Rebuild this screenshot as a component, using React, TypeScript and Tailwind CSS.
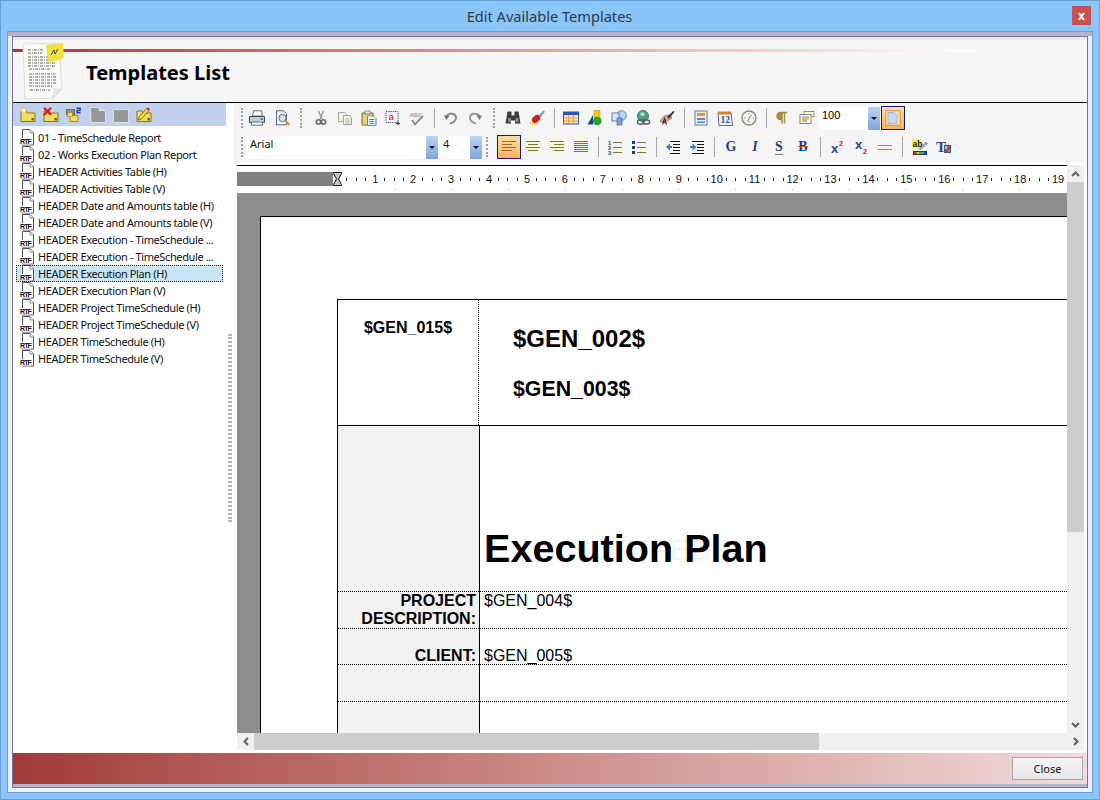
import React from "react";

const UI = "font-['Noto_Sans','DejaVu_Sans',sans-serif]";
const DOC = "font-['Liberation_Sans',Arial,sans-serif]";

function Svg({ children, s = 16 }: { children: React.ReactNode; s?: number }) {
  return (
    <svg width={s} height={s} viewBox="0 0 16 16" className="block shrink-0 overflow-visible">
      {children}
    </svg>
  );
}

const Folder = ({ fill = "#f3df5e", edge = "#7a6618" }: { fill?: string; edge?: string }) => (
  <>
    <path d="M1 6 V4 h5 l1 2 h8 v8.5 H1z" fill={fill} stroke={edge} strokeWidth="0.9" />
    <rect x="11.5" y="11" width="2.4" height="2.4" fill="#6b5a18" />
  </>
);

const icons: Record<string, React.ReactNode> = {
  newf: (
    <Svg>
      <Folder />
      <circle cx="3.5" cy="3.5" r="2.6" fill="#fff2a0" stroke="#e8b030" strokeWidth="1" strokeDasharray="1 .6" />
    </Svg>
  ),
  delf: (
    <Svg>
      <Folder />
      <path d="M1 .8 8 8M8 .8 1 8" stroke="#d81e10" strokeWidth="2.2" />
    </Svg>
  ),
  swapf: (
    <Svg>
      <rect x="0.5" y="2.5" width="8" height="5.5" fill="#8d8d8d" stroke="#555" strokeWidth=".7" />
      <path d="M4 8.5 h8 v6 H4z" fill="#f3df5e" stroke="#8a7420" strokeWidth=".8" />
      <rect x="1.5" y="5.5" width="5" height="4" fill="#f3df5e" stroke="#8a7420" strokeWidth=".6" />
      <path d="M10.5 1.2 h3.6 v2.4 h-3 v2.2 h3.4" fill="none" stroke="#1a46a8" strokeWidth="1.5" />
    </Svg>
  ),
  gray1: (
    <Svg>
      <path d="M0.5 .5 h8 l1 3 h6 v12 H1 z" fill="#989898" stroke="#fff" strokeWidth=".6" />
    </Svg>
  ),
  gray2: (
    <Svg>
      <path d="M.5 2.500 h15 v13 H.5z" fill="#989898" stroke="#fff" strokeWidth=".6" />
    </Svg>
  ),
  editf: (
    <Svg>
      <Folder />
      <path d="M3 10 10.5 1.5 13 3.5 5.5 12 2.5 13z" fill="#f8d848" stroke="#6b5a18" strokeWidth=".8" />
      <path d="M10.5 1.5 13 3.5 14 2 12 .4z" fill="#d81e10" />
    </Svg>
  ),
  print: (
    <Svg>
      <path d="M4.500 .8 h8 l1 5.200 H3.500z" fill="#fff" stroke="#4c5a72" strokeWidth=".9" />
      <path d="M.5 6.500 h15 v6 H.5z" fill="#c4ced9" stroke="#3c4c62" />
      <path d="M2.500 12 h11 v3.200 H2.500z" fill="#fff" stroke="#4c5a72" strokeWidth=".9" />
      <rect x="11.5" y="8" width="2.500" height="1.800" fill="#3f78c0" />
    </Svg>
  ),
  preview: (
    <Svg>
      <path d="M1.500 .8 h7 l3 3 v11 h-10z" fill="#fff" stroke="#3f4c7c" strokeWidth=".9" />
      <circle cx="7.5" cy="8" r="3.700" fill="#d6e6f5" stroke="#5a6a80" />
      <path d="M10 10.5 14.5 15" stroke="#c89a30" strokeWidth="2.200" />
    </Svg>
  ),
  cut: (
    <Svg>
      <path d="M5.5 1 9 9M10.5 1 7 9" stroke="#9a9a9a" strokeWidth="1.4" />
      <circle cx="5.5" cy="12" r="2.2" fill="none" stroke="#6a6a6a" strokeWidth="1.6" />
      <circle cx="10.5" cy="12" r="2.2" fill="none" stroke="#6a6a6a" strokeWidth="1.6" />
    </Svg>
  ),
  copy: (
    <Svg>
      <path d="M1.5 2.5 h6 l2 2 v7 h-8z" fill="#f2f2e8" stroke="#a6a698" />
      <path d="M6.5 5.5 h6 l2 2 v7 h-8z" fill="#f6f6ee" stroke="#a6a698" />
      <path d="M8 9h5M8 11h5M8 13h5" stroke="#b5b5a8" />
    </Svg>
  ),
  paste: (
    <Svg>
      <path d="M1 3 h11 v12 H1z" fill="#e4cf80" stroke="#7d6a30" />
      <rect x="4" y="1" width="5" height="3" fill="#eee" stroke="#666" strokeWidth=".7" />
      <path d="M6.5 6 h6 l2.5 2.5 V15.5 H6.5z" fill="#fff" stroke="#5a6a80" strokeWidth=".8" />
      <path d="M8 9.5h5.5M8 11.5h5.5M8 13.5h5.5" stroke="#2f8fb0" />
    </Svg>
  ),
  selall: (
    <Svg>
      <rect x="1" y="1.5" width="12" height="11" fill="none" stroke="#2050c0" strokeDasharray="1.3 1" />
      <text x="3.5" y="10" fontSize="9.5" fontFamily="Liberation Sans" fill="#b01818">a</text>
      <path d="M13 11.5v4M11 13.5h4" stroke="#333" />
    </Svg>
  ),
  spell: (
    <Svg>
      <text x="0.5" y="6.5" fontSize="6" fontWeight="700" fontFamily="Liberation Sans" fill="#9a9a9a">ABC</text>
      <path d="M3 10 6 14.5 14 6" fill="none" stroke="#8e8e8e" strokeWidth="2" />
    </Svg>
  ),
  undo: (
    <Svg>
      <path d="M3.500 8 C3 3 12 2 13 7 C13.500 10 11 13 7 13.500" fill="none" stroke="#8d8d8d" strokeWidth="2" />
      <path d="M1 5.500 L6.500 5.500 L3.500 10z" fill="#6f6f6f" />
    </Svg>
  ),
  redo: (
    <Svg>
      <path d="M12.500 8 C13 3 4 2 3 7 C2.500 10 5 13 9 13.500" fill="none" stroke="#9a9a9a" strokeWidth="2" />
      <path d="M15 5.500 L9.500 5.500 L12.500 10z" fill="#7a7a7a" />
    </Svg>
  ),
  binoc: (
    <Svg>
      <path d="M2.500 1.500 h4 v4 h3 v-4 h4 l2 12 h-5.500 v-3 h-4 v3 H.5z" fill="#3c3c3c" />
      <rect x="3" y="8" width="3" height="4" fill="#8a8a8a" />
      <rect x="10.500" y="8" width="3" height="4" fill="#8a8a8a" />
    </Svg>
  ),
  brush: (
    <Svg>
      <path d="M9 6.500 14.500 .8 15.500 1.800 10.500 8z" fill="#8aa8cc" stroke="#4a6a90" strokeWidth=".5" />
      <ellipse cx="7" cy="9" rx="4.500" ry="3.400" transform="rotate(-40 7 9)" fill="#c42818" />
      <path d="M1 13c2 1 5 2 7 .5" stroke="#f0b020" strokeWidth="2" fill="none" strokeDasharray="1 1" />
    </Svg>
  ),
  table: (
    <Svg>
      <rect x=".5" y="2" width="15" height="12" fill="#fbe3a8" stroke="#1c5cc0" />
      <rect x=".5" y="2" width="15" height="3" fill="#1c5cc0" />
      <path d="M.5 8h15M.5 11h15M5.500 5v9M10.500 5v9" stroke="#e89020" strokeWidth=".8" />
    </Svg>
  ),
  shapes: (
    <Svg>
      <path d="M7 .5 h6 v8 H7z" fill="#f4c820" stroke="#a08010" strokeWidth=".5" />
      <path d="M.5 14.500 6 5 v9.500z" fill="#1f3f86" />
      <path d="M6 11 a4 4 0 1 1 8.500 0 a4 4 0 1 1 -8.500 0" fill="#2aa02a" />
    </Svg>
  ),
  shapes2: (
    <Svg>
      <circle cx="10.500" cy="5.500" r="4.800" fill="#b8d4f0" stroke="#5a84b0" />
      <rect x="1" y="3" width="7" height="8" fill="#d8e8f8" stroke="#5a84b0" />
      <path d="M6 8 h5 v7 H6z" fill="#7aa6d8" stroke="#40689a" strokeWidth=".7" />
    </Svg>
  ),
  globe: (
    <Svg>
      <circle cx="8" cy="6" r="5.500" fill="#4aa868" stroke="#506a80" />
      <path d="M5 3 q4-2 5 1 q-1 3-4 2z" fill="#a8d8f0" />
      <rect x="2.500" y="10" width="6.500" height="4" rx="2" fill="none" stroke="#4a5c78" strokeWidth="1.400" />
      <rect x="8" y="10" width="6.500" height="4" rx="2" fill="none" stroke="#4a5c78" strokeWidth="1.400" />
    </Svg>
  ),
  pen: (
    <Svg>
      <path d="M1 12 Q4 4 11 5 L13 8 Q8 13 1 12z" fill="#f0a070" stroke="#a05020" strokeWidth=".6" />
      <path d="M8 7 14.500 .8 15.500 2 10 8.500z" fill="#333" />
      <path d="M3.500 14.500 l2 -6 2 6M4.300 12.500h2.600" stroke="#202080" strokeWidth="1.100" fill="none" />
    </Svg>
  ),
  form: (
    <Svg>
      <rect x="2" y="1" width="12" height="14" fill="#e8eef8" stroke="#6a7a98" />
      <rect x="4" y="3" width="8" height="3" fill="#e89830" />
      <rect x="4" y="8" width="8" height="2" fill="#5a8ad0" />
      <rect x="4" y="11.500" width="8" height="1.500" fill="#5a8ad0" />
    </Svg>
  ),
  cal: (
    <Svg>
      <path d="M1 3 h13 l1.500 12.500 H2z" fill="#f4f6fa" stroke="#5a6a8a" />
      <path d="M1 1.500 h13 v3 H1z" fill="#d88030" />
      <text x="3.500" y="13" fontSize="9.500" fontWeight="700" fontFamily="Liberation Serif" fill="#1e4c9c">12</text>
    </Svg>
  ),
  clock: (
    <Svg>
      <circle cx="8" cy="8" r="7" fill="#f4f4ee" stroke="#8c8c84" strokeWidth="1.400" />
      <path d="M8 3v1.500M8 11.500V13M3 8h1.500M11.500 8H13" stroke="#a0a090" />
      <path d="M8 8l2.500-3M8 8l-1 3" stroke="#8a7a50" fill="none" />
    </Svg>
  ),
  para: (
    <Svg>
      <path d="M7 13.500V2.500h-1.500a3.400 3.400 0 0 0 0 7H7M7 2.500h5M9.500 2.500v11" fill="#a88a40" stroke="#a88a40" strokeWidth="1.500" />
    </Svg>
  ),
  field: (
    <Svg>
      <rect x="5" y="1.500" width="10" height="5" fill="#fff" stroke="#a89040" />
      <rect x="1" y="4.500" width="11" height="9" fill="#f8f8f0" stroke="#7a8898" />
      <path d="M3 7h7M3 9h7M3 11h5" stroke="#a08830" />
    </Svg>
  ),
  page: (
    <Svg>
      <rect x=".8" y=".8" width="14.400" height="14.400" fill="#ffe0a8" stroke="#b09048" strokeWidth=".8" />
      <path d="M3 2.500 h6 l3 3 v8 H3z" fill="#c8d8f0" stroke="#98a8c8" strokeWidth=".7" />
    </Svg>
  ),
  left: (
    <Svg>
      <path d="M1 2.500h14M1 5.500h10M1 8.500h14M1 11.500h10" stroke="#8f7420" />
    </Svg>
  ),
  center: (
    <Svg>
      <path d="M1 2.500h14M3 5.500h10M1 8.500h14M3 11.500h10" stroke="#8f7420" />
    </Svg>
  ),
  right: (
    <Svg>
      <path d="M1 2.500h14M5 5.500h10M1 8.500h14M5 11.500h10" stroke="#8f7420" />
    </Svg>
  ),
  just: (
    <Svg>
      <path d="M1 2.500h14M1 4.500h14M1 6.500h14M1 8.500h14M1 10.500h14M1 12.500h14" stroke="#8f7420" />
    </Svg>
  ),
  num: (
    <Svg>
      <text x="1" y="5.500" fontSize="5.500" fontWeight="700" fontFamily="Liberation Sans" fill="#1c3c80">1</text>
      <text x="1" y="10.500" fontSize="5.500" fontWeight="700" fontFamily="Liberation Sans" fill="#1c3c80">2</text>
      <text x="1" y="15.500" fontSize="5.500" fontWeight="700" fontFamily="Liberation Sans" fill="#1c3c80">3</text>
      <path d="M6 3.500h9M6 8.500h9M6 13.500h9" stroke="#8f7420" />
    </Svg>
  ),
  bul: (
    <Svg>
      <rect x="1" y="2" width="3" height="3" fill="#1c3c80" />
      <rect x="1" y="7" width="3" height="3" fill="#1c3c80" />
      <rect x="1" y="12" width="3" height="3" fill="#1c3c80" />
      <path d="M6 3.500h9M6 8.500h9M6 13.500h9" stroke="#8f7420" />
    </Svg>
  ),
  outd: (
    <Svg>
      <path d="M5 2.500h10M8 5.500h7M8 8.500h7M8 11.500h7M5 14.500h10" stroke="#111" />
      <path d="M1 8l4-3.500V7h2v2H5v2.500z" fill="#3a78c8" />
    </Svg>
  ),
  ind: (
    <Svg>
      <path d="M3 2.500h12M8 5.500h7M8 8.500h7M8 11.500h7M3 14.500h12" stroke="#111" />
      <path d="M7.500 8 3.500 4.500V7H1v2h2.500v2.500z" fill="#3a78c8" />
    </Svg>
  ),
  sup: (
    <Svg>
      <text x="2" y="14" fontSize="13" fontWeight="700" fontFamily="Liberation Sans" fill="#1a4c9c">x</text>
      <text x="10" y="7" fontSize="7" fontWeight="700" fontFamily="Liberation Sans" fill="#c02020">2</text>
    </Svg>
  ),
  sub: (
    <Svg>
      <text x="2" y="9.500" fontSize="13" fontWeight="700" fontFamily="Liberation Sans" fill="#1a4c9c">x</text>
      <text x="10" y="14.500" fontSize="7" fontWeight="700" fontFamily="Liberation Sans" fill="#c02020">2</text>
    </Svg>
  ),
  eq: (
    <Svg>
      <path d="M1 6.500h14M1 10.500h14" stroke="#a08840" strokeWidth="1" />
    </Svg>
  ),
  ab: (
    <Svg>
      <rect x="0" y="0" width="9" height="9" fill="#f4ec60" />
      <text x="0.500" y="7.500" fontSize="8.500" fontWeight="700" fontFamily="Liberation Sans" fill="#222">ab</text>
      <path d="M7 10 14 3l1.500 1.500-7 6z" fill="#9ab0c8" stroke="#5a6a80" strokeWidth=".5" />
      <rect x="1" y="12" width="14" height="4" fill="#333" />
      <rect x="2" y="13" width="2.500" height="2" fill="#e03030" />
      <rect x="4.500" y="13" width="2.500" height="2" fill="#f0d020" />
      <rect x="7" y="13" width="2.500" height="2" fill="#30c040" />
      <rect x="9.500" y="13" width="2.500" height="2" fill="#20c0d0" />
      <rect x="12" y="13" width="2.500" height="2" fill="#2040d0" />
    </Svg>
  ),
  tcolor: (
    <Svg>
      <text x="0" y="12.500" fontSize="15" fontWeight="700" fontFamily="Liberation Serif" fill="#1c4c90">T</text>
      <rect x="8" y="6" width="7" height="8" fill="#3a50a0" />
      <rect x="9" y="7" width="2.500" height="3" fill="#f0d020" />
      <rect x="11.500" y="7" width="2.500" height="3" fill="#e03020" />
      <rect x="9" y="10" width="2.500" height="3" fill="#e03020" />
      <rect x="11.500" y="10" width="2.500" height="3" fill="#40b040" />
    </Svg>
  ),
  bold: (
    <span className="font-['Liberation_Serif',serif] font-bold text-[14px] leading-none text-[#1a3f86]">G</span>
  ),
  ital: (
    <span className="font-['Liberation_Serif',serif] font-bold italic text-[14px] leading-none text-[#1a3f86]">I</span>
  ),
  under: (
    <span className="font-['Liberation_Serif',serif] font-bold text-[14px] leading-none text-[#1a3f86] border-b border-[#a07820]">S</span>
  ),
  strike: (
    <span className="font-['Liberation_Serif',serif] font-bold text-[14px] leading-none text-[#1a3f86] line-through decoration-[#c05020]">B</span>
  ),
};

const Btn = ({ i, on }: { i: string; on?: boolean }) => (
  <div
    className={
      "w-6 h-6 flex items-center justify-center shrink-0 " +
      (on ? "border border-[#0a1f78] bg-gradient-to-b from-[#ffdca8] to-[#fdb05c]" : "")
    }
  >
    {icons[i]}
  </div>
);
const Sep = () => (
  <div className="w-[10px] h-6 flex justify-center shrink-0">
    <div className="w-px h-[20px] mt-[2px] bg-[#a8a8a8]" />
  </div>
);
const Grip = ({ className = "" }: { className?: string }) => (
  <div className={"w-[2px] h-[20px] border-l-2 border-dotted border-[#a0a0a0] shrink-0 " + className} />
);
const Arrow = () => (
  <div className="w-3 h-[23px] bg-gradient-to-b from-[#bcd4f4] to-[#7ea6de] flex items-center justify-center shrink-0">
    <div className="w-0 h-0 border-x-[3px] border-t-[3px] border-x-transparent border-t-[#111]" />
  </div>
);

const Rtf = () => (
  <svg width="16" height="17" viewBox="0 0 16 17" className="block shrink-0">
    <path d="M3.500 .5 h7.500 l3.500 3.500 v12 h-11z" fill="#fff" stroke="#555" strokeWidth="1" />
    <path d="M11 .5 v3.500 h3.500" fill="#eee" stroke="#777" strokeWidth=".8" />
    <rect x="1" y="9" width="11" height="6.500" fill="#fff" />
    <text x="1" y="15" fontSize="7" fontWeight="700" fontFamily="Liberation Sans" fill="#111" textLength="11.500">RTF</text>
  </svg>
);

const rows = [
  "01 - TimeSchedule Report",
  "02 - Works Execution Plan Report",
  "HEADER Activities Table (H)",
  "HEADER Activities Table (V)",
  "HEADER Date and Amounts table (H)",
  "HEADER Date and Amounts table (V)",
  "HEADER Execution - TimeSchedule ...",
  "HEADER Execution - TimeSchedule ...",
  "HEADER Execution Plan (H)",
  "HEADER Execution Plan (V)",
  "HEADER Project TimeSchedule (H)",
  "HEADER Project TimeSchedule (V)",
  "HEADER TimeSchedule (H)",
  "HEADER TimeSchedule (V)",
];

const slots: (number | null)[] = [];
for (let n = 1; n <= 19; n++) {
  slots.push(null, null, null, n);
}

export default function App() {
  return (
    <div className={"w-[1100px] h-[800px] bg-[#8ac5fc] border border-[#6e9fd2] flex flex-col overflow-hidden " + UI}>
      {/* title bar */}
      <div className="h-[30px] shrink-0 flex">
        <div className="flex-1" />
        <div className="pt-[4px] pl-[7px] text-[14.600px] leading-[22px] text-[#2a3a4a]">Edit Available Templates</div>
        <div className="flex-1 flex justify-end pr-[8px] pt-[5px]">
          <div className="w-[19px] h-[19px] bg-[#c75050] flex items-center justify-center text-white text-[12px] font-bold leading-none">
            x
          </div>
        </div>
      </div>

      {/* client */}
      <div className="flex-1 mx-[6px] mb-[6px] border border-[#6e9fd2] bg-[#eef0fb] px-[4px] pb-[4px] flex flex-col min-h-0">
        <div className="-mx-[4px] h-[4px] bg-[#b4b4c8] shrink-0" />
        <div className="flex-1 min-h-0 border border-[#75759a] flex flex-col bg-white">
          <div className="h-[3px] bg-[#e9e9f2] shrink-0" />
          {/* header */}
          <div className="h-[63px] shrink-0 bg-[#f6f6f6] border-b border-black flex relative">
            <div className="absolute left-0 top-[9px] w-[962px] h-[3px] bg-gradient-to-r from-[#a03c3c] to-[#ffffff]" />
            <div className="relative ml-[9px] mt-[2px] w-[42px] h-[58px]">
              <svg width="42" height="58" viewBox="0 0 42 58" className="block">
                <path d="M1 2 L37 1 L40 47 L31 56 L3 57z" fill="#fbfbf6" stroke="#dcdcdc" />
                <path d="M31 56 L32 47 L40 47z" fill="#e8e8e8" stroke="#ccc" strokeWidth=".5" />
                <path
                  d="M6 8h16M6 11h14M6 15h26M6 18h26M6 21h28M6 24h28M7 27h22M7 32h26M7 35h28M7 38h27M7 41h28M7 44h24M8 48h20"
                  stroke="#666"
                  strokeWidth="1"
                  strokeDasharray="3 1 1 1"
                />
                <path d="M24 3 L41 1 L42 15 Q38 19 26 20z" fill="#f0e040" />
                <path d="M29 13 l3-5 1 4 3-5" stroke="#444" fill="none" />
              </svg>
            </div>
            <div className="relative ml-[22px] text-[20px] font-bold text-black leading-none pt-[23px]">Templates List</div>
          </div>

          {/* body */}
          <div className="flex-1 min-h-0 flex">
            {/* left */}
            <div className="w-[213px] shrink-0 flex flex-col">
              <div className="h-[23px] bg-[#c1d1ed] flex items-center pl-[3px] shrink-0">
                {["newf", "delf", "swapf", "gray1", "gray2", "editf"].map((k) => (
                  <div key={k} className="w-[23.300px] flex justify-center">
                    {icons[k]}
                  </div>
                ))}
              </div>
              <div className="pt-[3px] pl-[3px] flex flex-col">
                {rows.map((r, i) => (
                  <div
                    key={i}
                    className={
                      "h-[17px] w-[207px] flex items-center gap-[3px] pl-[3px] text-[11px] tracking-[-0.38px] text-[#111] whitespace-nowrap leading-none " +
                      (i === 8 ? "bg-[#c9e6f6] outline-1 outline-dotted outline-[#222] -outline-offset-1" : "")
                    }
                  >
                    <Rtf />
                    <span>{r}</span>
                  </div>
                ))}
              </div>
            </div>

            {/* sash */}
            <div className="w-[8px] shrink-0 flex items-center justify-center">
              <div className="w-[4px] h-[188px] border-x-2 border-dotted border-[#b4b4b4]" />
            </div>

            {/* right */}
            <div className="flex-1 min-w-0 flex flex-col">
              {/* toolbars */}
              <div className="h-[59px] bg-[#f5f5f5] shrink-0 flex flex-col pl-[7px] pt-[3px] gap-[5px]">
                <div className="flex items-center h-6">
                  <Grip className="mr-[2px]" />
                  <Btn i="print" />
                  <div className="w-[2px]" />
                  <Btn i="preview" />
                  <Grip className="mx-[5px]" />
                  <div className="w-[2px]" />
                  <Btn i="cut" />
                  <Btn i="copy" />
                  <Btn i="paste" />
                  <Btn i="selall" />
                  <Btn i="spell" />
                  <Sep />
                  <Btn i="undo" />
                  <Btn i="redo" />
                  <Grip className="mx-[6px]" />
                  <Btn i="binoc" />
                  <Btn i="brush" />
                  <Sep />
                  <Btn i="table" />
                  <Btn i="shapes" />
                  <Btn i="shapes2" />
                  <Btn i="globe" />
                  <Btn i="pen" />
                  <Sep />
                  <Btn i="form" />
                  <Btn i="cal" />
                  <Btn i="clock" />
                  <Sep />
                  <Btn i="para" />
                  <Btn i="field" />
                  <div className={"w-[49px] h-[23px] bg-white text-[11px] pl-[3px] leading-[16px] " + DOC}>100</div>
                  <Arrow />
                  <div className="w-[1px]" />
                  <Btn i="page" on />
                </div>
                <div className="flex items-center h-6">
                  <Grip className="mr-[3px]" />
                  <div className={"w-[180px] h-[23px] bg-white text-[11px] pl-[4px] leading-[16px] text-[#111] " + UI}>Arial</div>
                  <Arrow />
                  <div className="w-[32px] h-[23px] bg-white text-[11px] pl-[5px] leading-[16px] text-[#111]">4</div>
                  <Arrow />
                  <Grip className="ml-[4px] mr-[6px]" />
                  <div className="w-[3px]" />
                  <Btn i="left" on />
                  <Btn i="center" />
                  <Btn i="right" />
                  <Btn i="just" />
                  <Sep />
                  <Btn i="num" />
                  <Btn i="bul" />
                  <Sep />
                  <Btn i="outd" />
                  <Btn i="ind" />
                  <Sep />
                  <Btn i="bold" />
                  <Btn i="ital" />
                  <Btn i="under" />
                  <Btn i="strike" />
                  <Sep />
                  <Btn i="sup" />
                  <Btn i="sub" />
                  <Btn i="eq" />
                  <Sep />
                  <div className="w-[1px]" />
                  <Btn i="ab" />
                  <Btn i="tcolor" />
                </div>
              </div>

              {/* editor */}
              <div className="h-[3px] shrink-0" />
              <div className="flex-1 min-h-0 ml-[3px] flex flex-col">
                <div className="flex-1 min-h-0 flex">
                  <div className="flex-1 min-w-0 flex flex-col overflow-hidden">
                    <div className="h-px bg-black shrink-0" />
                    <div className="h-[6px] shrink-0" />
                    <div className={"h-[14px] shrink-0 flex items-center overflow-hidden bg-white " + DOC}>
                      <div className="w-[96px] h-full bg-[#808080] shrink-0" />
                      <svg width="9" height="14" viewBox="0 0 9 14" className="block shrink-0">
                        <path d="M.5 .5h8v1L5.500 7l3 5.500v1h-8v-1L3.500 7 .5 1.500z" fill="#c4c4c4" stroke="#111" />
                      </svg>
                      <div className="flex shrink-0">
                        {slots.map((n, i) => (
                          <div key={i} className="w-[9.490px] shrink-0 flex justify-center items-center h-[14px]">
                            {n === null ? (
                              <div className="w-px h-[3px] bg-[#222]" />
                            ) : (
                              <span className="text-[11px] leading-none text-[#111] bg-white">{n}</span>
                            )}
                          </div>
                        ))}
                      </div>
                    </div>
                    <div className="h-[7px] shrink-0 flex pl-[158px] pt-[2px]">
                      {Array.from({ length: 12 }).map((_, i) => (
                        <div key={i} className="w-[56.700px] shrink-0">
                          <div className="w-px h-[3px] bg-[#dedede]" />
                        </div>
                      ))}
                    </div>
                    {/* document */}
                    <div className={"flex-1 min-h-0 bg-[#8e8e8e] pl-[23px] pt-[23px] overflow-hidden " + DOC}>
                      <div className="w-[900px] h-[700px] bg-white border-l border-t border-black pl-[76px] pt-[82px]">
                        <div className="w-[820px] border-l border-t border-black text-black">
                          <div className="h-[126px] flex border-b border-black">
                            <div className="w-[141px] border-r border-dotted border-black pt-[19px] text-center text-[16px] font-bold leading-[18px]">
                              $GEN_015$
                            </div>
                            <div className="pl-[34px] pt-[25px] font-bold">
                              <div className="text-[24px] leading-[28px]">$GEN_002$</div>
                              <div className="text-[21.330px] leading-[24px] mt-[24px]">$GEN_003$</div>
                            </div>
                          </div>
                          <div className="flex">
                            <div className="w-[142px] shrink-0 bg-[#f2f2f2] border-r border-black h-[320px]" />
                          </div>
                          <div className="-mt-[320px] flex flex-col">
                            <div className="h-[165px] pl-[146px] flex items-end relative">
                              <div className="text-[39.600px] leading-[46px] font-bold pb-[20px]">Execution Plan</div>
                              <div className="absolute left-[232px] top-[106px] text-[30px] leading-[36px] text-black opacity-[0.04]">
                                SOFTPEDIA
                              </div>
                            </div>
                            <div className="h-[37px] border-t border-dotted border-black flex text-[16px] leading-[18px]">
                              <div className="w-[138px] text-right font-bold">
                                PROJECT
                                <br />
                                DESCRIPTION:
                              </div>
                              <div className="pl-[8px]">$GEN_004$</div>
                            </div>
                            <div className="h-[36px] border-t border-dotted border-black flex text-[16px] leading-[18px] pt-[18px]">
                              <div className="w-[138px] text-right font-bold">CLIENT:</div>
                              <div className="pl-[8px]">$GEN_005$</div>
                            </div>
                            <div className="h-[37px] border-t border-dotted border-black" />
                            <div className="h-[37px] border-t border-dotted border-black" />
                          </div>
                        </div>
                      </div>
                    </div>
                  </div>
                  {/* vertical scrollbar */}
                  <div className="w-[17px] shrink-0 bg-[#f0f0f0] flex flex-col">
                    <div className="h-[17px] flex items-center justify-center shrink-0">
                      <svg width="9" height="6" viewBox="0 0 9 6"><path d="M1 5 4.500 1.500 8 5" fill="none" stroke="#606060" strokeWidth="2" /></svg>
                    </div>
                    <div className="h-[350px] bg-[#cdcdcd] shrink-0" />
                    <div className="flex-1" />
                    <div className="h-[17px] flex items-center justify-center shrink-0">
                      <svg width="9" height="6" viewBox="0 0 9 6"><path d="M1 1 4.500 4.500 8 1" fill="none" stroke="#606060" strokeWidth="2" /></svg>
                    </div>
                  </div>
                  <div className="w-[3px] shrink-0" />
                </div>
                {/* horizontal scrollbar */}
                <div className="h-[17px] shrink-0 bg-[#f0f0f0] flex mr-[3px]">
                  <div className="w-[17px] flex items-center justify-center shrink-0">
                    <svg width="6" height="9" viewBox="0 0 6 9"><path d="M5 1 1.500 4.500 5 8" fill="none" stroke="#606060" strokeWidth="2" /></svg>
                  </div>
                  <div className="w-[565px] bg-[#cdcdcd] shrink-0" />
                  <div className="flex-1" />
                  <div className="w-[17px] flex items-center justify-center shrink-0">
                    <svg width="6" height="9" viewBox="0 0 6 9"><path d="M1 1 4.500 4.500 1 8" fill="none" stroke="#606060" strokeWidth="2" /></svg>
                  </div>
                </div>
                <div className="h-[3px] shrink-0" />
              </div>
            </div>
          </div>

          {/* footer */}
          <div className="h-[31px] shrink-0 bg-gradient-to-r from-[#a03a3a] to-[#f0dcdc] flex items-center justify-end pr-[4px]">
            <div className="w-[71px] h-[23px] border border-[#a8a8a8] bg-gradient-to-b from-[#f6f6f6] to-[#e6e6e6] flex items-center justify-center text-[11px] text-[#111] leading-none">
              Close
            </div>
          </div>
          <div className="h-[3px] bg-[#b4b4c8] shrink-0" />
        </div>
      </div>
    </div>
  );
}
